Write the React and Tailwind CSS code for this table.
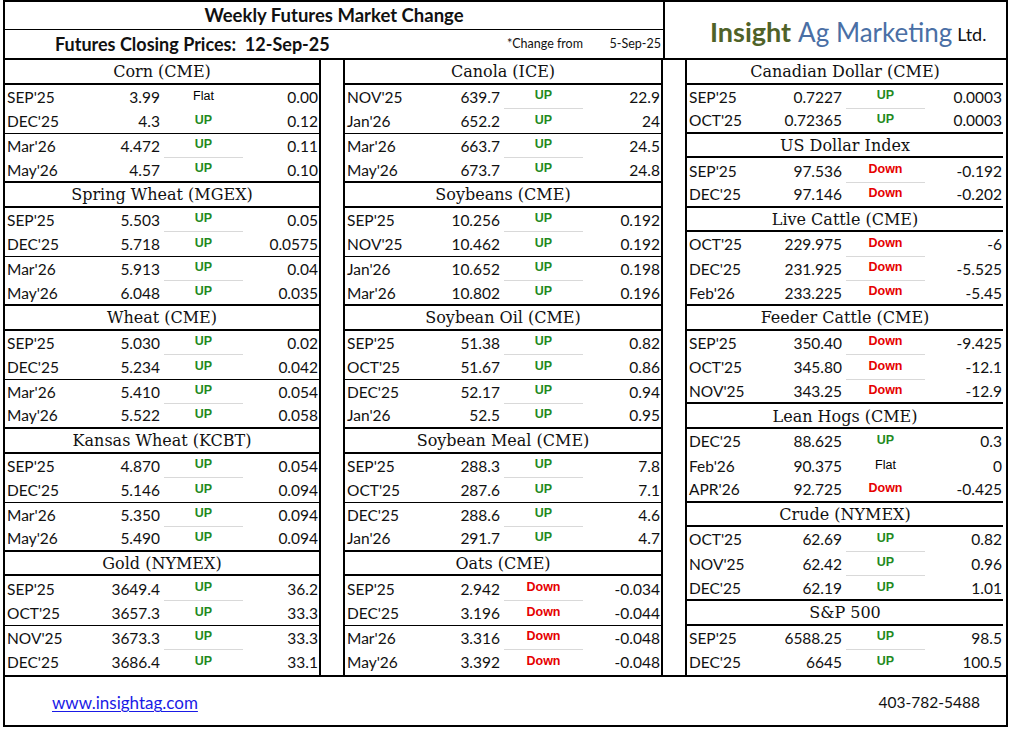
import React from "react";

const sans = { fontFamily: "Lato, 'Open Sans', sans-serif" };

const left = [
  {
    name: "Corn (CME)",
    rows: [
      ["SEP'25", "3.99", "Flat", "0.00"],
      ["DEC'25", "4.3", "UP", "0.12"],
      ["Mar'26", "4.472", "UP", "0.11"],
      ["May'26", "4.57", "UP", "0.10"],
    ],
  },
  {
    name: "Spring Wheat (MGEX)",
    rows: [
      ["SEP'25", "5.503", "UP", "0.05"],
      ["DEC'25", "5.718", "UP", "0.0575"],
      ["Mar'26", "5.913", "UP", "0.04"],
      ["May'26", "6.048", "UP", "0.035"],
    ],
  },
  {
    name: "Wheat (CME)",
    rows: [
      ["SEP'25", "5.030", "UP", "0.02"],
      ["DEC'25", "5.234", "UP", "0.042"],
      ["Mar'26", "5.410", "UP", "0.054"],
      ["May'26", "5.522", "UP", "0.058"],
    ],
  },
  {
    name: "Kansas Wheat (KCBT)",
    rows: [
      ["SEP'25", "4.870", "UP", "0.054"],
      ["DEC'25", "5.146", "UP", "0.094"],
      ["Mar'26", "5.350", "UP", "0.094"],
      ["May'26", "5.490", "UP", "0.094"],
    ],
  },
  {
    name: "Gold (NYMEX)",
    rows: [
      ["SEP'25", "3649.4", "UP", "36.2"],
      ["OCT'25", "3657.3", "UP", "33.3"],
      ["NOV'25", "3673.3", "UP", "33.3"],
      ["DEC'25", "3686.4", "UP", "33.1"],
    ],
  },
];

const middle = [
  {
    name: "Canola (ICE)",
    rows: [
      ["NOV'25", "639.7", "UP", "22.9"],
      ["Jan'26", "652.2", "UP", "24"],
      ["Mar'26", "663.7", "UP", "24.5"],
      ["May'26", "673.7", "UP", "24.8"],
    ],
  },
  {
    name: "Soybeans (CME)",
    rows: [
      ["SEP'25", "10.256", "UP", "0.192"],
      ["NOV'25", "10.462", "UP", "0.192"],
      ["Jan'26", "10.652", "UP", "0.198"],
      ["Mar'26", "10.802", "UP", "0.196"],
    ],
  },
  {
    name: "Soybean Oil (CME)",
    rows: [
      ["SEP'25", "51.38", "UP", "0.82"],
      ["OCT'25", "51.67", "UP", "0.86"],
      ["DEC'25", "52.17", "UP", "0.94"],
      ["Jan'26", "52.5", "UP", "0.95"],
    ],
  },
  {
    name: "Soybean Meal (CME)",
    rows: [
      ["SEP'25", "288.3", "UP", "7.8"],
      ["OCT'25", "287.6", "UP", "7.1"],
      ["DEC'25", "288.6", "UP", "4.6"],
      ["Jan'26", "291.7", "UP", "4.7"],
    ],
  },
  {
    name: "Oats (CME)",
    rows: [
      ["SEP'25", "2.942", "Down", "-0.034"],
      ["DEC'25", "3.196", "Down", "-0.044"],
      ["Mar'26", "3.316", "Down", "-0.048"],
      ["May'26", "3.392", "Down", "-0.048"],
    ],
  },
];

const right = [
  {
    name: "Canadian Dollar (CME)",
    rows: [
      ["SEP'25", "0.7227", "UP", "0.0003"],
      ["OCT'25", "0.72365", "UP", "0.0003"],
    ],
  },
  {
    name: "US Dollar Index",
    rows: [
      ["SEP'25", "97.536", "Down", "-0.192"],
      ["DEC'25", "97.146", "Down", "-0.202"],
    ],
  },
  {
    name: "Live Cattle (CME)",
    rows: [
      ["OCT'25", "229.975", "Down", "-6"],
      ["DEC'25", "231.925", "Down", "-5.525"],
      ["Feb'26", "233.225", "Down", "-5.45"],
    ],
  },
  {
    name: "Feeder Cattle (CME)",
    rows: [
      ["SEP'25", "350.40", "Down", "-9.425"],
      ["OCT'25", "345.80", "Down", "-12.1"],
      ["NOV'25", "343.25", "Down", "-12.9"],
    ],
  },
  {
    name: "Lean Hogs (CME)",
    rows: [
      ["DEC'25", "88.625", "UP", "0.3"],
      ["Feb'26", "90.375", "Flat", "0"],
      ["APR'26", "92.725", "Down", "-0.425"],
    ],
  },
  {
    name: "Crude (NYMEX)",
    rows: [
      ["OCT'25", "62.69", "UP", "0.82"],
      ["NOV'25", "62.42", "UP", "0.96"],
      ["DEC'25", "62.19", "UP", "1.01"],
    ],
  },
  {
    name: "S&P 500",
    rows: [
      ["SEP'25", "6588.25", "UP", "98.5"],
      ["DEC'25", "6645", "UP", "100.5"],
    ],
  },
];

function Status({ value }) {
  const color =
    value === "UP"
      ? "text-[#1f8a1f] font-bold"
      : value === "Down"
      ? "text-[#e60000] font-bold"
      : "text-black";
  return (
    <span
      className={`${color} text-[12.5px] leading-none`}
      style={{ fontFamily: "'Liberation Sans', Arial, sans-serif" }}
    >
      {value}
    </span>
  );
}

function Block({ block, last }) {
  const n = block.rows.length;
  return (
    <div>
      <div
        className="h-[24.6px] pt-[2px] border-b-2 border-black flex items-center justify-center text-[16px] text-[#111]"
        style={{ fontFamily: "'DejaVu Serif', serif" }}
      >
        {block.name}
      </div>
      {block.rows.map((r, i) => {
        const next = block.rows[i + 1];
        // pairs only in 4-row blocks
        const endOfPair = n === 4 && i === 1;
        const isLast = i === n - 1;
        const grey = next && !endOfPair && next[2] === r[2];
        let border = "";
        if (isLast && !last) border = "border-b-2 border-black";
        else if (endOfPair) border = "border-b border-black";
        return (
          <div
            key={i}
            className={`h-[24.6px] pt-[1px] flex items-center text-[15.5px] text-[#111] ${border}`}
            style={sans}
          >
            <div className="w-[78px] pl-[2px]">{r[0]}</div>
            <div className="w-[77px] text-right">{r[1]}</div>
            <div
              className={`w-[79px] ml-[4px] self-stretch flex items-center justify-center pb-[3px] ${
                grey ? "border-b border-[#d9d9d9]" : ""
              }`}
            >
              <Status value={r[2]} />
            </div>
            <div className="flex-1 text-right pr-[1px]">{r[3]}</div>
          </div>
        );
      })}
    </div>
  );
}

function Column({ blocks, className }) {
  return (
    <div className={`w-[316px] flex flex-col ${className}`}>
      {blocks.map((b, i) => (
        <Block key={b.name} block={b} last={i === blocks.length - 1} />
      ))}
    </div>
  );
}

export default function App() {
  return (
    <div className="bg-white w-[1009px] h-[730px] pl-[3px]">
      <div className="w-[1005px] h-[727px] border-2 border-black flex flex-col bg-white">
        {/* header */}
        <div className="flex h-[58px] border-b-2 border-black">
          <div className="w-[660px] border-r-2 border-black flex flex-col">
            <div
              className="h-[28px] border-b border-black flex items-center justify-center font-bold text-[18.5px] text-[#111]"
              style={sans}
            >
              Weekly Futures Market Change
            </div>
            <div className="flex-1 flex items-center" style={sans}>
              <div className="pl-[50px] font-bold text-[18px] text-[#111] whitespace-pre">
                {"Futures Closing Prices:  12-Sep-25"}
              </div>
              <div className="ml-auto text-[12.5px] text-[#111]">*Change from</div>
              <div className="w-[80px] text-right pr-[2px] text-[12.5px] text-[#111]">5-Sep-25</div>
            </div>
          </div>
          <div className="flex-1 flex items-center pl-[45px] pt-[5px]" style={sans}>
            <span className="font-bold text-[27px] text-[#4f6228]">Insight</span>
            <span className="text-[26px] text-[#4a6fa5] ml-[7px]">Ag Marketing</span>
            <span className="text-[18px] text-[#111] ml-[5px] mt-[4px]">Ltd.</span>
          </div>
        </div>

        {/* market blocks */}
        <div className="flex h-[617px] border-b-2 border-black">
          <Column blocks={left} className="border-r-2 border-black" />
          <div className="w-[22px]" />
          <Column blocks={middle} className="border-x-2 border-black w-[320px]" />
          <div className="w-[22px]" />
          <Column blocks={right} className="border-l-2 border-black w-[318px]" />
        </div>

        {/* footer */}
        <div className="flex-1 flex items-center justify-between pl-[47px] pr-[26px] pt-[4px]" style={sans}>
          <span className="text-[17px] text-[#1a1ae6] underline underline-offset-2">
            www.insightag.com
          </span>
          <span className="text-[15.5px] text-[#111]">403-782-5488</span>
        </div>
      </div>
    </div>
  );
}
